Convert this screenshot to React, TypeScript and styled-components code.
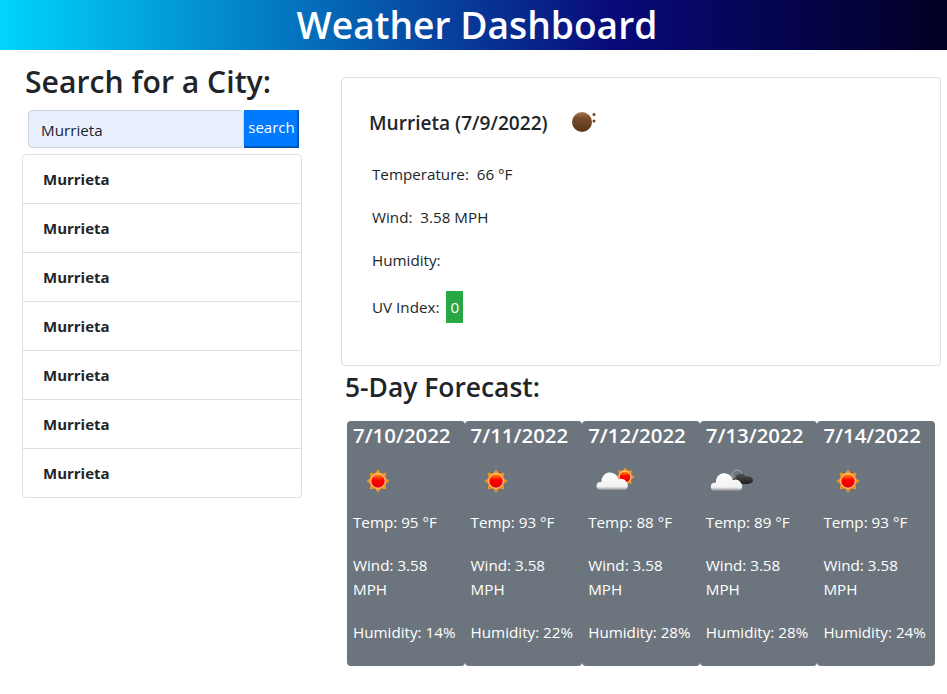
import React from 'react'
import styled, { createGlobalStyle } from 'styled-components'

const GlobalStyle = createGlobalStyle`
  html, body {
    margin: 0;
    background: #fff;
    color: #212529;
    font-family: "Open Sans", "Noto Sans", sans-serif;
    font-size: 15.2px;
    line-height: 24px;
  }
  * { box-sizing: border-box; }
`

const forecast = [
  { date: '7/10/2022', icon: 'sun', temp: 95, humidity: 14 },
  { date: '7/11/2022', icon: 'sun', temp: 93, humidity: 22 },
  { date: '7/12/2022', icon: 'cloudSun', temp: 88, humidity: 28 },
  { date: '7/13/2022', icon: 'cloudDark', temp: 89, humidity: 28 },
  { date: '7/14/2022', icon: 'sun', temp: 93, humidity: 24 },
]

const SunShape = ({ cx, cy, r }: { cx: number; cy: number; r: number }) => {
  const points: string[] = []
  for (let i = 0; i < 16; i++) {
    const a = (i * Math.PI) / 8 - Math.PI / 2
    const d = i % 2 === 0 ? r : r * 0.7
    points.push(`${cx + d * Math.cos(a)},${cy + d * Math.sin(a)}`)
  }
  return (
    <>
      <polygon points={points.join(' ')} fill="#f7941d" />
      <circle cx={cx} cy={cy} r={r * 0.62} fill="url(#sunFill)" stroke="#ffe9c9" strokeWidth="0.8" />
    </>
  )
}

const CloudShape = ({ dx = 0, dy = 0 }: { dx?: number; dy?: number }) => (
  <path
    transform={`translate(${dx} ${dy})`}
    d="M12.500 34A4 4 0 0 1 12.500 26L13.500 26A8.600 8.600 0 0 1 30.500 23.500A6.600 6.600 0 0 1 38 34Z"
    fill="url(#cloudFill)"
  />
)

const WeatherIcon = ({ kind }: { kind: string }) => (
  <IconSvg viewBox="0 0 50 50">
    <defs>
      <linearGradient id="sunFill" x1="0" y1="0" x2="0" y2="1">
        <stop offset="0" stopColor="#ff9a00" />
        <stop offset="0.45" stopColor="#f00" />
        <stop offset="1" stopColor="#e60000" />
      </linearGradient>
      <linearGradient id="cloudFill" x1="0" y1="0" x2="0" y2="1">
        <stop offset="0" stopColor="#fff" />
        <stop offset="0.8" stopColor="#f2f2f2" />
        <stop offset="1" stopColor="#8f8f8f" />
      </linearGradient>
      <linearGradient id="darkFill" x1="0" y1="0" x2="0" y2="1">
        <stop offset="0" stopColor="#555" />
        <stop offset="1" stopColor="#1c1c1c" />
      </linearGradient>
      <linearGradient id="moonFill" x1="0" y1="0" x2="0" y2="1">
        <stop offset="0" stopColor="#a87a58" />
        <stop offset="0.3" stopColor="#7a4c2c" />
        <stop offset="1" stopColor="#5b3519" />
      </linearGradient>
    </defs>
    {kind === 'sun' && <SunShape cx={25} cy={25} r={11.6} />}
    {kind === 'cloudSun' && (
      <>
        <SunShape cx={37} cy={21} r={9.5} />
        <CloudShape />
      </>
    )}
    {kind === 'cloudDark' && (
      <>
        <circle cx={31} cy={19} r={5} fill="none" stroke="#b5b5b5" strokeWidth="0.8" />
        <path
          d="M30 28c-2 0-3.200-1.400-3.200-3s1.200-2.800 2.800-3c.5-2.800 2.500-4.500 5-4.500 2.200 0 4 1.200 4.700 3 .6-.2 1.200-.3 1.800-.3 3.300 0 5.900 1.600 5.900 3.900 0 2.300-2.300 3.900-5 3.900z"
          fill="url(#darkFill)"
        />
        <CloudShape dx={-3.7} dy={0.7} />
      </>
    )}
    {kind === 'moon' && (
      <>
        <circle cx={25} cy={25} r={10} fill="url(#moonFill)" />
        <circle cx={37} cy={17.500} r={1.500} fill="#6b4226" />
        <circle cx={37} cy={24} r={1.500} fill="#6b4226" />
      </>
    )}
  </IconSvg>
)

export default function App() {
  return (
    <>
      <GlobalStyle />
      <Header>
        <Title>Weather Dashboard</Title>
      </Header>
      <Main>
        <Sidebar>
          <SearchTitle>Search for a City:</SearchTitle>
          <SearchForm>
            <SearchInput readOnly value="Murrieta" />
            <SearchButton type="button">search</SearchButton>
          </SearchForm>
          <CityList>
            {Array.from({ length: 7 }).map((_, i) => (
              <CityItem key={i}>Murrieta</CityItem>
            ))}
          </CityList>
        </Sidebar>
        <Content>
          <CurrentCard>
            <CurrentTitle>
              <CityName>Murrieta (7/9/2022)</CityName>
              <WeatherIcon kind="moon" />
            </CurrentTitle>
            <Stat>Temperature:&nbsp; 66 °F</Stat>
            <Stat>Wind:&nbsp; 3.58 MPH</Stat>
            <Stat>Humidity:</Stat>
            <UvStat>
              UV Index: <UvBadge>0</UvBadge>
            </UvStat>
          </CurrentCard>
          <ForecastTitle>5-Day Forecast:</ForecastTitle>
          <ForecastRow>
            {forecast.map((day) => (
              <DayCard key={day.date}>
                <DayDate>{day.date}</DayDate>
                <DayIcon>
                  <WeatherIcon kind={day.icon} />
                </DayIcon>
                <DayStat>Temp: {day.temp} °F</DayStat>
                <DayStat>Wind: 3.58 MPH</DayStat>
                <DayStat>Humidity: {day.humidity}%</DayStat>
              </DayCard>
            ))}
          </ForecastRow>
        </Content>
      </Main>
    </>
  )
}

const Header = styled.header`
  height: 50px;
  display: flex;
  align-items: center;
  justify-content: center;
  padding-left: 7px;
  background: linear-gradient(90deg, #00d4ff 0%, #090979 65%, #020024 100%);
`

const Title = styled.h1`
  margin: 0;
  color: #fff;
  font-size: 37.2px;
  font-weight: 600;
  line-height: 50px;
`

const Main = styled.main`
  display: flex;
  align-items: flex-start;
`

const Sidebar = styled.aside`
  width: 341px;
  flex-shrink: 0;
  padding: 12px 0 0 22px;
`

const SearchTitle = styled.h2`
  margin: 0 0 9px 3px;
  font-size: 30.2px;
  font-weight: 600;
  line-height: 39px;
`

const SearchForm = styled.div`
  display: flex;
  margin-left: 6px;
  margin-bottom: 6px;
`

const SearchInput = styled.input`
  width: 216px;
  height: 38px;
  padding: 7px 12px 5px;
  border: 1px solid #ced4da;
  border-radius: 4px;
  background: #e8f0fe;
  color: #212529;
  font: inherit;
  outline: none;
`

const SearchButton = styled.button`
  width: 55px;
  height: 38px;
  padding: 0 0 2px 2px;
  border: 0;
  border-right: 2px solid #0056b3;
  border-bottom: 2px solid #0056b3;
  background: #007bff;
  color: #fff;
  font: inherit;
  font-size: 15px;
`

const CityList = styled.ul`
  width: 280px;
  margin: 0;
  padding: 0;
  list-style: none;
  border: 1px solid rgba(0, 0, 0, 0.125);
  border-radius: 4px;
`

const CityItem = styled.li`
  height: 49px;
  padding: 12px 20px 0;
  font-size: 15px;
  font-weight: 700;
  border-bottom: 1px solid rgba(0, 0, 0, 0.125);

  &:last-child {
    height: 48px;
    border-bottom: 0;
  }
`

const Content = styled.section`
  width: 600px;
  padding-top: 27px;
`

const CurrentCard = styled.div`
  height: 289px;
  padding: 19px 20px 0 27px;
  border: 1px solid rgba(0, 0, 0, 0.125);
  border-radius: 4px;
`

const CurrentTitle = styled.div`
  display: flex;
  align-items: center;
  gap: 9px;
  margin-bottom: 15px;
`

const CityName = styled.h5`
  margin: 0;
  padding-top: 2px;
  font-size: 19.1px;
  font-weight: 600;
  line-height: 24px;
`

const IconSvg = styled.svg`
  display: block;
  width: 50px;
  height: 50px;
  flex-shrink: 0;
`

const Stat = styled.p`
  margin: 0 0 19px 3px;
`

const UvStat = styled(Stat)`
  display: flex;
  align-items: center;
  gap: 7px;
  margin-top: 0;
`

const UvBadge = styled.span`
  display: block;
  width: 17px;
  height: 32px;
  background: #28a745;
  color: #fff;
  text-align: center;
  line-height: 32px;
`

const ForecastTitle = styled.h3`
  margin: 5px 0 18px 4px;
  font-size: 26.4px;
  font-weight: 600;
  line-height: 32px;
`

const ForecastRow = styled.div`
  display: grid;
  grid-template-columns: repeat(5, 1fr);
  width: 588px;
  margin-left: 6px;
`

const DayCard = styled.div`
  height: 245px;
  padding: 2px 6px 0;
  background: #6c757d;
  border-radius: 4px;
  color: #fff;
`

const DayDate = styled.h5`
  margin: 0 0 9px;
  font-size: 20.4px;
  font-weight: 600;
  line-height: 24px;
`

const DayIcon = styled.div`
  margin-bottom: 4px;
`

const DayStat = styled.p`
  margin: 0 0 19px;
`
